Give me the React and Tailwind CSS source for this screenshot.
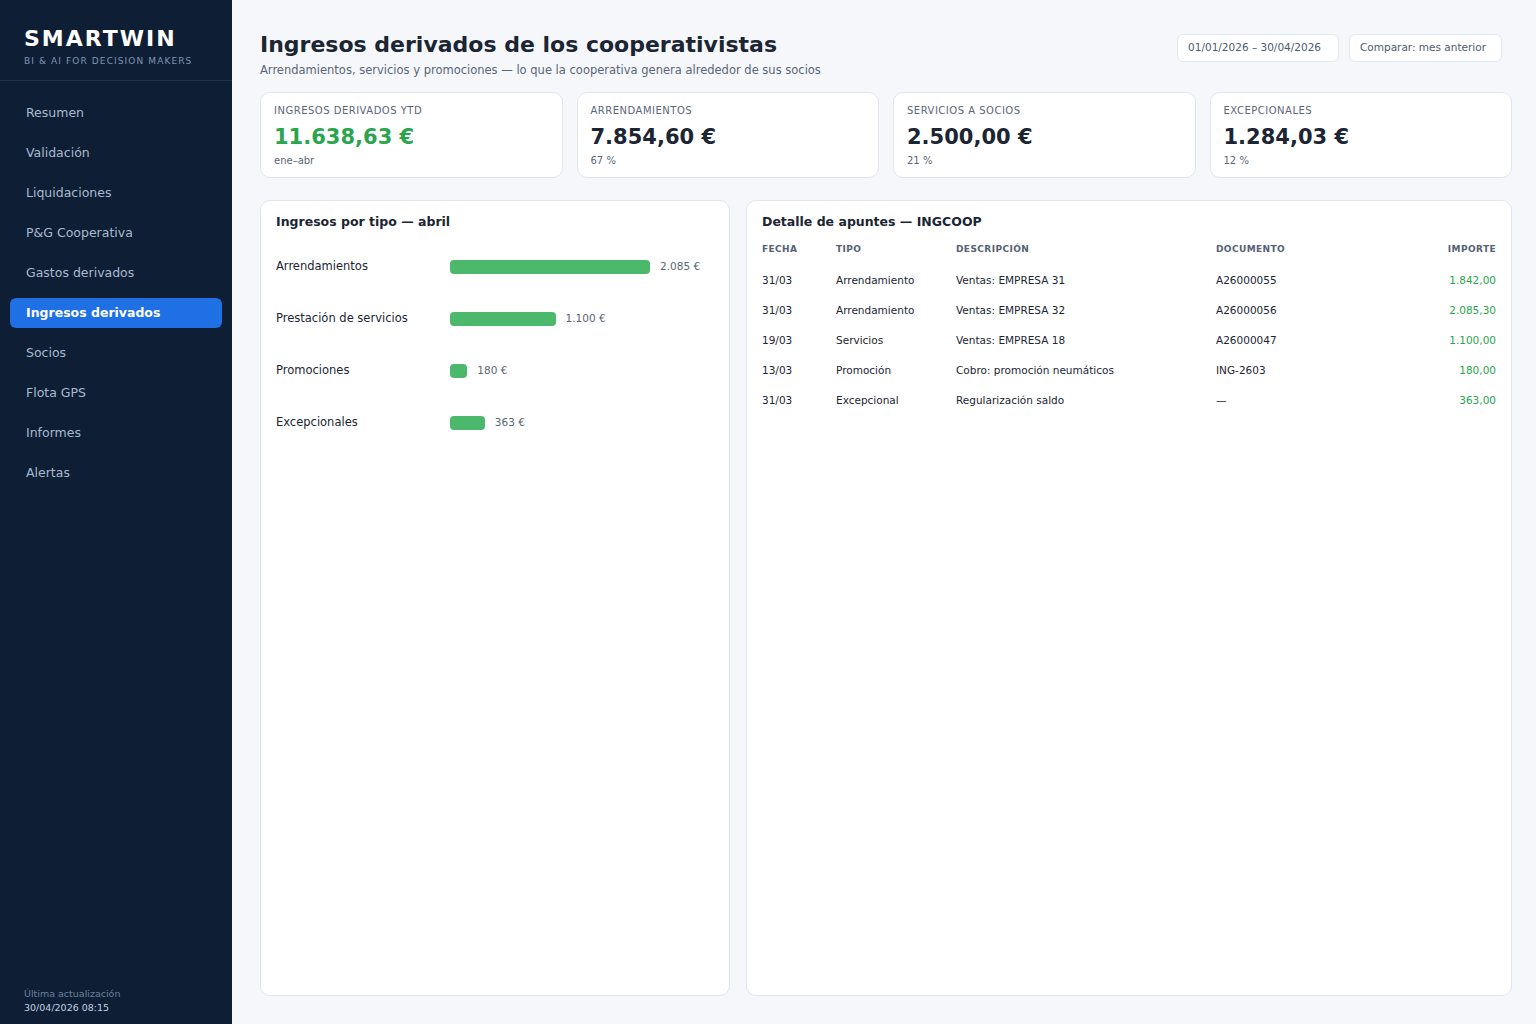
const NAV = [
  'Resumen', 'Validación', 'Liquidaciones', 'P&G Cooperativa', 'Gastos derivados',
  'Ingresos derivados', 'Socios', 'Flota GPS', 'Informes', 'Alertas',
]

const KPIS = [
  { label: 'Ingresos derivados YTD', value: '11.638,63 €', sub: 'ene–abr', green: true },
  { label: 'Arrendamientos', value: '7.854,60 €', sub: '67 %' },
  { label: 'Servicios a socios', value: '2.500,00 €', sub: '21 %' },
  { label: 'Excepcionales', value: '1.284,03 €', sub: '12 %' },
]

const BARS = [
  { label: 'Arrendamientos', value: 2085, text: '2.085 €' },
  { label: 'Prestación de servicios', value: 1100, text: '1.100 €' },
  { label: 'Promociones', value: 180, text: '180 €' },
  { label: 'Excepcionales', value: 363, text: '363 €' },
]

const ROWS = [
  ['31/03', 'Arrendamiento', 'Ventas: EMPRESA 31', 'A26000055', '1.842,00'],
  ['31/03', 'Arrendamiento', 'Ventas: EMPRESA 32', 'A26000056', '2.085,30'],
  ['19/03', 'Servicios', 'Ventas: EMPRESA 18', 'A26000047', '1.100,00'],
  ['13/03', 'Promoción', 'Cobro: promoción neumáticos', 'ING-2603', '180,00'],
  ['31/03', 'Excepcional', 'Regularización saldo', '—', '363,00'],
]

const MAX_BAR = 2085

function Sidebar() {
  return (
    <aside className="w-[232px] shrink-0 bg-[#0e1f35] flex flex-col">
      <div className="px-6 pt-[26px] pb-[13px] border-b border-[#1f3350]">
        <div className="text-[22px] leading-[26px] font-bold tracking-[2px] text-white">SMARTWIN</div>
        <div className="text-[9px] leading-[12px] mt-[3px] tracking-[1.1px] text-[#7f95b4]">BI &amp; AI FOR DECISION MAKERS</div>
      </div>

      <nav className="px-[10px] pt-[17px] flex flex-col gap-[10px]">
        {NAV.map(item => item === 'Ingresos derivados' ? (
          <div key={item} className="h-[30px] rounded-md bg-[#1f6fe5] px-4 flex items-center text-[12.5px] font-bold text-white">
            {item}
          </div>
        ) : (
          <div key={item} className="h-[30px] px-4 flex items-center text-[12.5px] text-[#a9b9cf]">
            {item}
          </div>
        ))}
      </nav>

      <div className="mt-auto px-6 pb-[9px]">
        <div className="text-[9.5px] leading-[14px] text-[#6a7f9c]">Última actualización</div>
        <div className="text-[9.5px] leading-[14px] text-[#c3d0e2]">30/04/2026 08:15</div>
      </div>
    </aside>
  )
}

export default function App() {
  return (
    <div className="flex w-full h-[1024px] bg-[#f5f7fa] text-[#1b2533]" style={{ fontFamily: '"DejaVu Sans", sans-serif' }}>
      <Sidebar />

      <main className="flex-1 flex flex-col pl-7 pr-6 pt-[31px] pb-7 min-w-0">
        {/* Header */}
        <div className="flex items-start justify-between pr-[10px]">
          <div>
            <h1 className="text-[22px] leading-[28px] font-bold text-[#1b2533]">Ingresos derivados de los cooperativistas</h1>
            <p className="text-[11.5px] leading-[16px] mt-[3px] text-[#5a6677]">
              Arrendamientos, servicios y promociones — lo que la cooperativa genera alrededor de sus socios
            </p>
          </div>
          <div className="flex gap-[10px] pt-[3px]">
            <div className="h-[28px] pl-[10px] pr-[17px] flex items-center rounded-md border border-[#e1e6ee] bg-white text-[10.5px] text-[#4f5b6b]">
              01/01/2026 – 30/04/2026
            </div>
            <div className="h-[28px] pl-[10px] pr-[15px] flex items-center rounded-md border border-[#e1e6ee] bg-white text-[10.5px] text-[#4f5b6b]">
              Comparar: mes anterior
            </div>
          </div>
        </div>

        {/* KPI cards */}
        <div className="grid grid-cols-4 gap-[14px] mt-[14px]">
          {KPIS.map(k => (
            <div key={k.label} className="h-[86px] rounded-[10px] border border-[#e1e6ee] bg-white px-[13px] pt-[12px]">
              <div className="text-[10px] leading-[12px] uppercase tracking-[0.5px] text-[#5a6677]">{k.label}</div>
              <div className={`text-[21px] leading-[26px] font-bold mt-[7px] ${k.green ? 'text-[#2aa54d]' : 'text-[#1b2533]'}`}>{k.value}</div>
              <div className="text-[10px] leading-[12px] mt-[5px] text-[#5a6677]">{k.sub}</div>
            </div>
          ))}
        </div>

        {/* Panels */}
        <div className="grid grid-cols-[470px_1fr] gap-4 mt-[22px] flex-1 min-h-0">
          <section className="rounded-[10px] border border-[#e1e6ee] bg-white px-[15px] pt-[13px]">
            <h2 className="text-[12.5px] leading-[16px] font-bold text-[#1b2533]">Ingresos por tipo — abril</h2>
            <div className="mt-[30px] flex flex-col gap-[38px]">
              {BARS.map(b => (
                <div key={b.label} className="flex items-center h-[14px]">
                  <div className="w-[174px] shrink-0 text-[11.5px] text-[#1b2533]">{b.label}</div>
                  <div className="h-[14px] rounded-[4px] bg-[#4cb86b]" style={{ width: `${(b.value / MAX_BAR) * 200}px` }} />
                  <div className="ml-[10px] text-[10.5px] text-[#5a6677]">{b.text}</div>
                </div>
              ))}
            </div>
          </section>

          <section className="rounded-[10px] border border-[#e1e6ee] bg-white px-[15px] pt-[13px]">
            <h2 className="text-[12.5px] leading-[16px] font-bold text-[#1b2533]">Detalle de apuntes — INGCOOP</h2>
            <div className="mt-[13px] grid grid-cols-[74px_120px_260px_1fr_auto] h-[14px] items-center text-[9px] font-bold uppercase tracking-[0.4px] text-[#556174]">
              <div>Fecha</div>
              <div>Tipo</div>
              <div>Descripción</div>
              <div>Documento</div>
              <div className="text-right">Importe</div>
            </div>
            <div className="mt-[9px]">
              {ROWS.map((r, i) => (
                <div key={i} className="grid grid-cols-[74px_120px_260px_1fr_auto] h-[30px] items-center text-[10.5px] text-[#1b2533]">
                  <div>{r[0]}</div>
                  <div>{r[1]}</div>
                  <div>{r[2]}</div>
                  <div>{r[3]}</div>
                  <div className="text-right text-[#2aa54d]">{r[4]}</div>
                </div>
              ))}
            </div>
          </section>
        </div>
      </main>
    </div>
  )
}
